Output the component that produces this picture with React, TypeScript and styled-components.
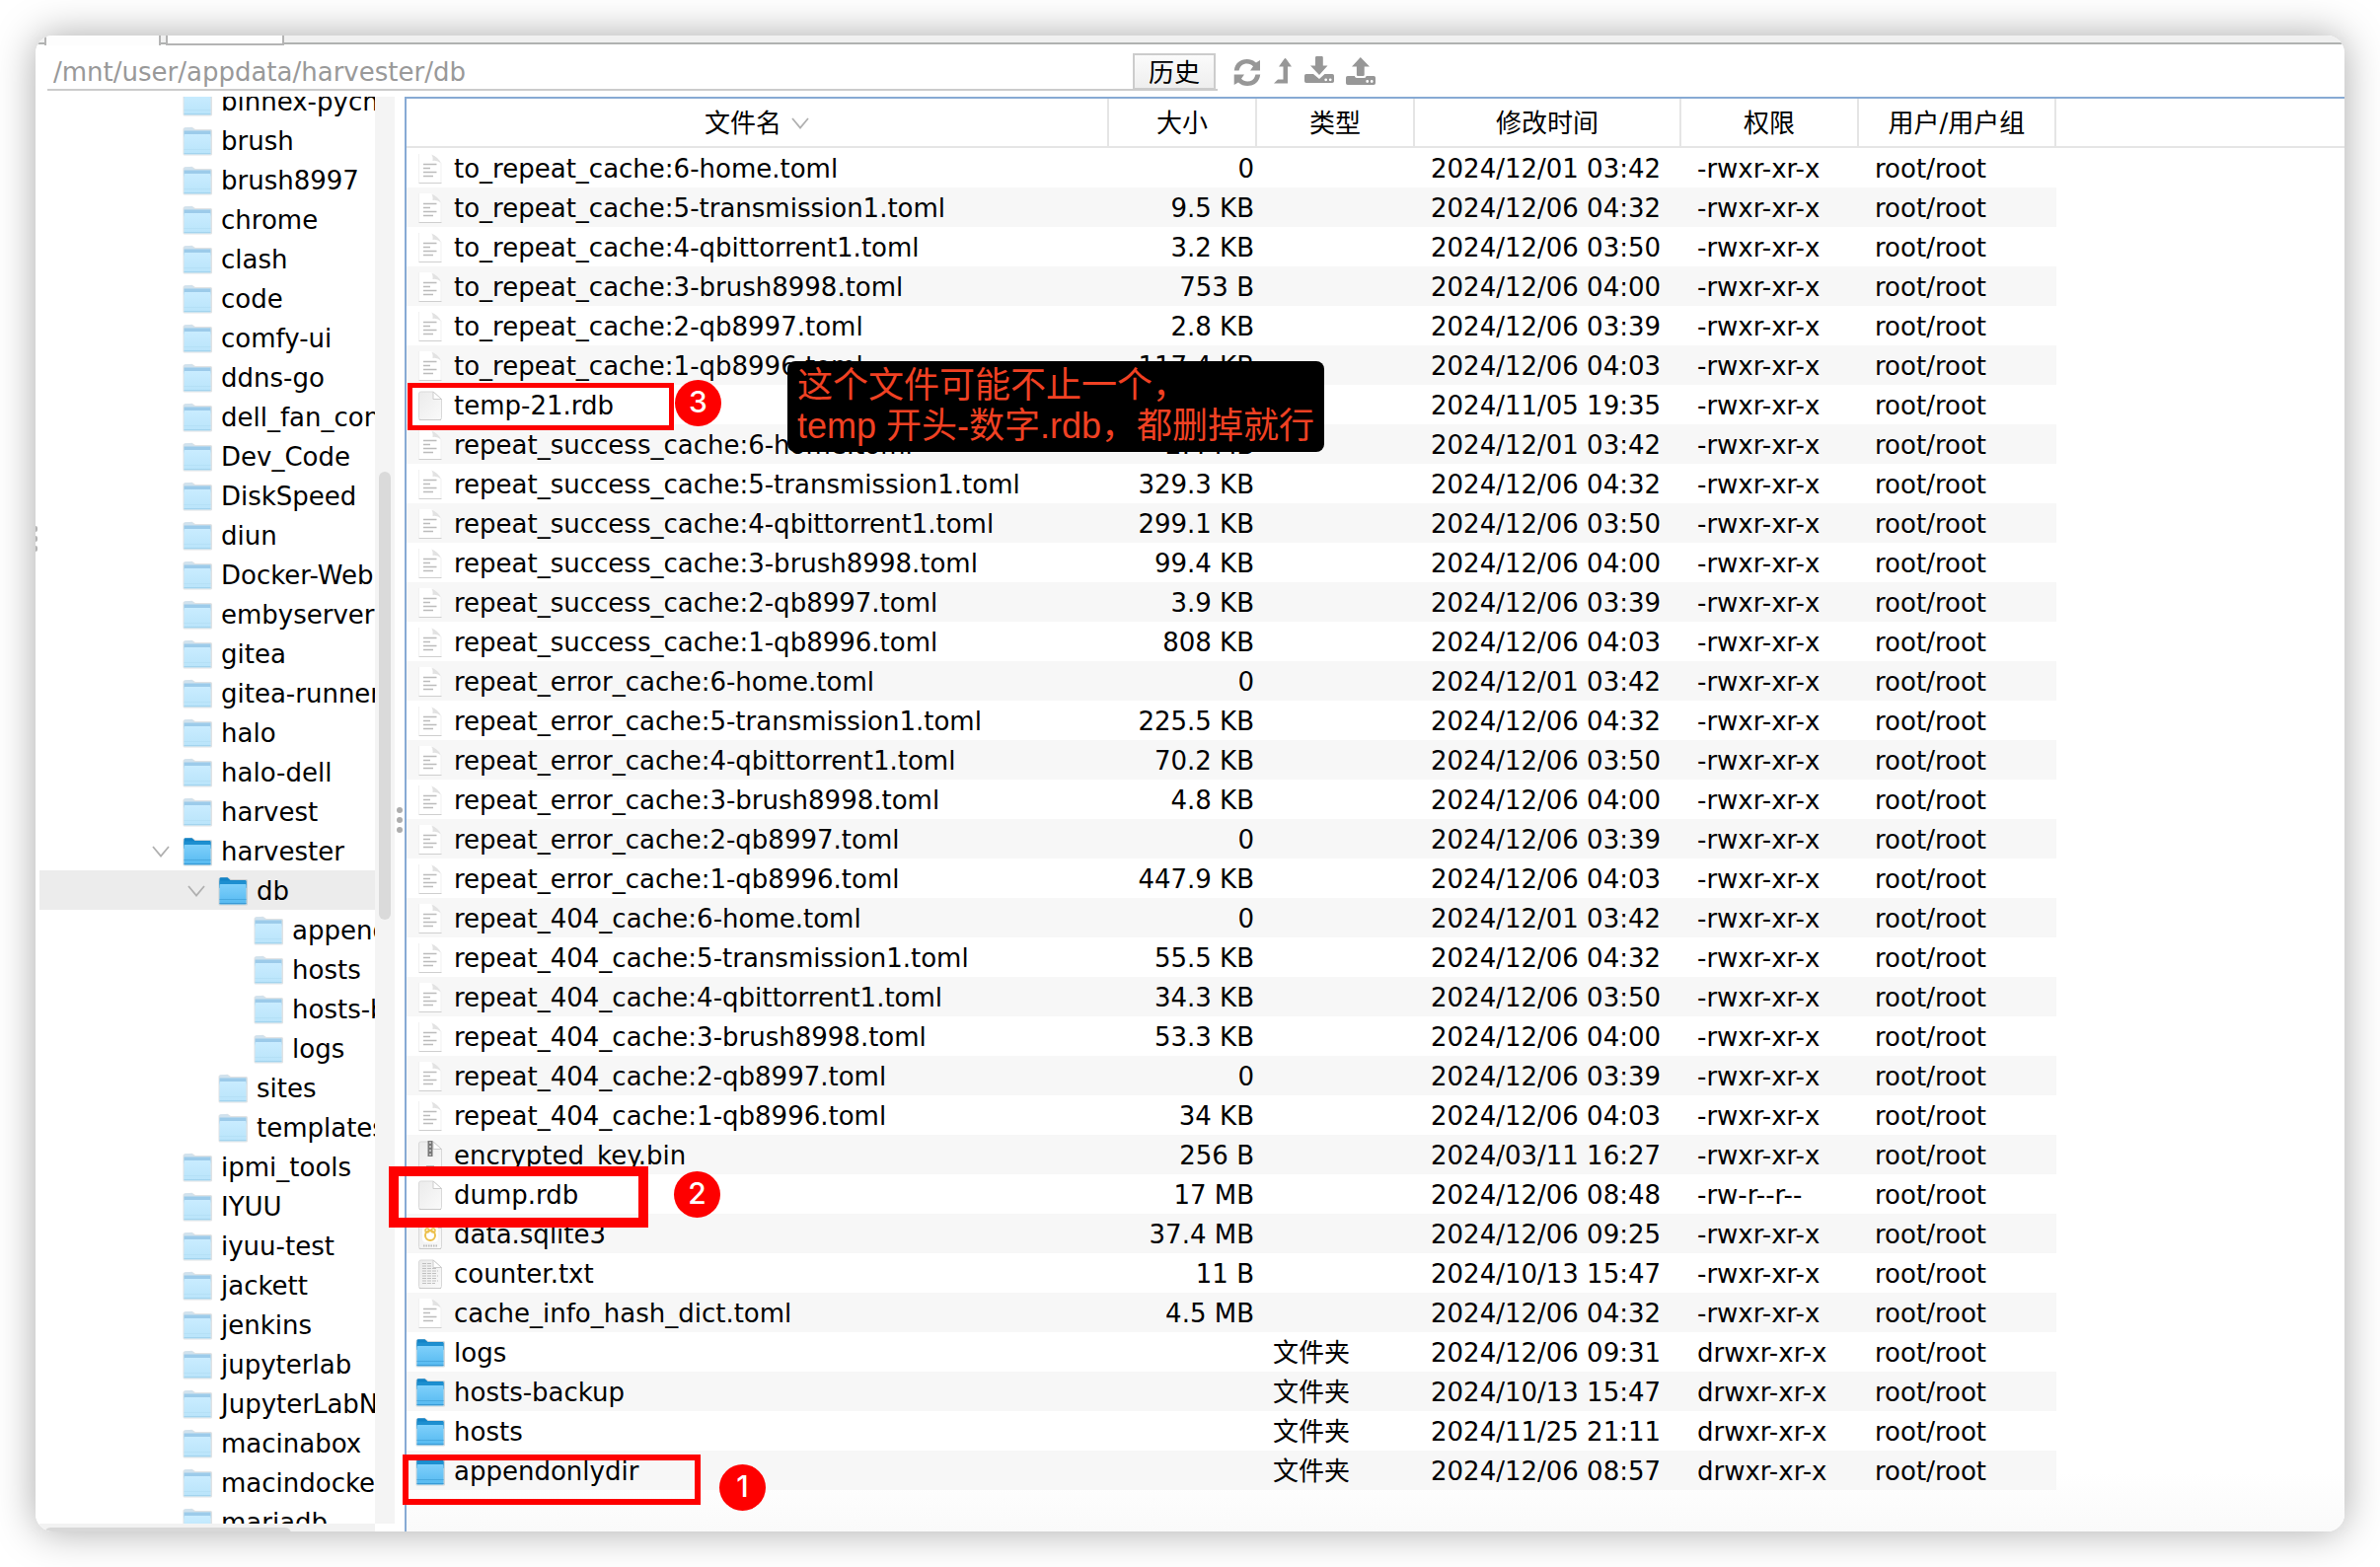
import React from "react";
import styled, { createGlobalStyle } from "styled-components";

const UI_FONT = '"DejaVu Sans", "Noto Sans CJK SC", sans-serif';
const NOTE_FONT = '"Liberation Sans", "Noto Sans CJK SC", sans-serif';

const GlobalStyle = createGlobalStyle`
  * { box-sizing: border-box; }
  body { margin: 0; background: #fff; }
`;

const Page = styled.div`
  height: 100vh;
  padding: 36px;
  display: flex;
  font-family: ${UI_FONT};
  font-size: 26px;
  line-height: 38px;
  color: #000;
`;

const Shell = styled.main`
  position: relative;
  flex: 1;
  min-width: 0;
  display: flex;
  border-radius: 18px;
  box-shadow: 0 0 40px rgba(0, 0, 0, 0.34);
`;

const Window = styled.div`
  flex: 1;
  min-width: 0;
  display: flex;
  flex-direction: column;
  overflow: hidden;
  border-radius: 18px;
  background: #fff;
`;

const TabStrip = styled.div`
  flex: none;
  height: 10px;
  padding-left: 9px;
  display: flex;
  gap: 5px;
  background: linear-gradient(#f0f0f0 7px, #b0b2b1 7px, #b0b2b1 9px, #fff 9px);
`;

const Tab = styled.div<{ $active?: boolean }>`
  width: ${(p) => (p.$active ? 118 : 120)}px;
  border: 2px solid #b4b4b4;
  border-top: 0;
  border-bottom-width: ${(p) => (p.$active ? 0 : 2)}px;
  background: #fdfdfd;
`;

const Toolbar = styled.div`
  flex: none;
  height: 52px;
  padding-left: 12px;
  display: flex;
  align-items: flex-start;
`;

const PathBar = styled.div`
  flex: 0 1 1186px;
  height: 46px;
  padding-right: 2px;
  display: flex;
  align-items: flex-end;
  border-bottom: 2px solid #cbcbcb;
`;

const PathInput = styled.input`
  flex: 1;
  min-width: 0;
  height: 34px;
  padding: 0 6px;
  border: 0;
  outline: 0;
  background: none;
  color: #999;
  font: inherit;
  line-height: 34px;
`;

const HistoryButton = styled.button`
  width: 84px;
  height: 36px;
  padding: 2px 0 0;
  border: 2px solid #ccc;
  border-bottom-width: 1px;
  background: linear-gradient(#fbfbfb, #eee);
  color: #000;
  font: inherit;
  line-height: 30px;
`;

const Actions = styled.div`
  display: flex;
  gap: 12px;
  padding: 10px 0 0 16px;
`;

const IconButton = styled.button`
  padding: 0;
  border: 0;
  background: none;
  color: #979797;
  height: 32px;
  svg { display: block; fill: currentColor; }
`;

const Body = styled.div`
  flex: 1;
  min-height: 0;
  display: flex;
`;

const OuterGrip = styled.div`
  flex: none;
  width: 4px;
  padding-top: 435px;
  display: flex;
  flex-direction: column;
  gap: 4px;
  i { width: 2px; height: 6px; background: #b4b4b4; border-radius: 0 3px 3px 0; }
`;

const Sidebar = styled.nav`
  flex: none;
  width: 360px;
  display: grid;
  grid-template-columns: 340px 20px;
  grid-template-rows: minmax(0, 1fr) 8px;
`;

const TreeViewport = styled.div`
  overflow: hidden;
`;

const Tree = styled.ul`
  list-style: none;
  margin: -16px 0 0;
  padding: 0;
`;

const TreeRow = styled.li<{ $level: number; $selected?: boolean }>`
  display: flex;
  align-items: center;
  height: 40px;
  padding: 2px 0 0 ${(p) => 114 + p.$level * 36}px;
  background: ${(p) => (p.$selected ? "#ececec" : "transparent")};
  white-space: nowrap;
`;

const Twisty = styled.span`
  flex: none;
  width: 32px;
  svg { display: block; }
`;

const IconSlot = styled.span`
  flex: none;
  width: 28px;
  margin-right: 10px;
  display: flex;
  justify-content: center;
  svg { display: block; flex: none; }
`;

const VTrack = styled.div`
  padding: 380px 4px 0;
  background: #f4f4f4;
`;

const VThumb = styled.div`
  width: 12px;
  height: 454px;
  border-radius: 6px;
  background: #dadada;
`;

const HTrack = styled.div`
  padding: 4px 0 0 5px;
  background: #f2f2f2;
  overflow: hidden;
`;

const HThumb = styled.div`
  width: 250px;
  height: 12px;
  border-radius: 6px;
  background: #d8d8d8;
`;

const Splitter = styled.div`
  flex: none;
  width: 10px;
  display: flex;
  flex-direction: column;
  align-items: center;
  gap: 4px;
  padding-top: 720px;
  i { width: 6px; height: 6px; border-radius: 50%; background: #adadad; }
`;

const FilePane = styled.section`
  flex: 1;
  min-width: 0;
  overflow: hidden;
  border-top: 2px solid #87aad4;
  border-left: 2px solid #87aad4;
  background: linear-gradient(#fff calc(100% - 60px), #fafafa);
`;

const FileTable = styled.table`
  width: 100%;
  table-layout: fixed;
  border-collapse: separate;
  border-spacing: 0;
  white-space: nowrap;
`;

const Th = styled.th`
  height: 50px;
  padding: 2px 0 0;
  border-right: 2px solid #e5e5e5;
  border-bottom: 2px solid #e5e5e5;
  font-weight: 400;
  text-align: center;
  &:last-child { border-right: 0; }
`;

const SortLabel = styled.span`
  display: flex;
  align-items: center;
  justify-content: center;
  gap: 10px;
`;

const Tr = styled.tr`
  &:nth-child(even) td:not(:last-child) { background: #f7f7f7; }
`;

const Td = styled.td<{ $right?: boolean }>`
  height: 40px;
  padding: ${(p) => (p.$right ? "2px 3px 0 0" : "2px 0 0 16px")};
  text-align: ${(p) => (p.$right ? "right" : "left")};
`;

const NameCell = styled.td`
  height: 40px;
  padding: 2px 0 0 10px;
`;

const NameBox = styled.div`
  display: flex;
  align-items: center;
`;

const Outline = styled.div<{ $x: number; $y: number; $w: number; $h: number; $b: number }>`
  position: absolute;
  left: ${(p) => p.$x}px;
  top: ${(p) => p.$y}px;
  width: ${(p) => p.$w}px;
  height: ${(p) => p.$h}px;
  border: ${(p) => p.$b}px solid #fe0000;
  pointer-events: none;
`;

const Badge = styled.div<{ $x: number; $y: number }>`
  position: absolute;
  left: ${(p) => p.$x}px;
  top: ${(p) => p.$y}px;
  width: 47px;
  height: 47px;
  border-radius: 50%;
  background: #fe0000;
  color: #fff;
  font: 500 30px/44px Inter, sans-serif;
  text-align: center;
`;

const Note = styled.div`
  position: absolute;
  left: 762px;
  top: 330px;
  width: 544px;
  height: 92px;
  padding: 4px 10px 0;
  border-radius: 8px;
  background: #000;
  color: #f04123;
  font: 36px/41px ${NOTE_FONT};
  white-space: nowrap;
`;

function Folder({ light }: { light?: boolean }) {
  const id = light ? "folderLight" : "folderDeep";
  return (
    <svg width="30" height="30" viewBox="0 0 30 30" aria-hidden="true">
      <defs>
        <linearGradient id={id} x1="0" y1="0" x2="0" y2="1">
          <stop offset="0" stopColor={light ? "#c9ecff" : "#7fd0fb"} />
          <stop offset="1" stopColor={light ? "#b9e4fa" : "#55b9f0"} />
        </linearGradient>
      </defs>
      <path d="M.5 3Q.5 1.500 2 1.500L9.500 .8L13 3H28.500Q30 3 30 4.500V28Q30 29.500 28.500 29.500H2Q.5 29.500 .5 28Z" fill={light ? "#dfe2e4" : "#aeb9c0"} opacity={light ? 1 : 0.55} />
      <path d="M1.500 2.500Q1.500 1.300 3 1.300H9.500L12.500 4H27.500Q28.500 4 28.500 5.500V12H1.500Z" fill={light ? "#d0e2ee" : "#1283c6"} />
      <rect x="1.500" y="4.500" width="27" height="6" fill={light ? "#9ccbea" : "#1d8fd0"} />
      <rect x="1.500" y="8" width="27" height="20.500" rx="1" fill={`url(#${id})`} />
      <path d="M1.500 23.500H28.500" stroke={light ? "#b5e0f6" : "#48a9e0"} />
      <path d="M1.500 27.500H28.500" stroke={light ? "#a3d4ee" : "#3a9bd6"} />
    </svg>
  );
}

type Kind = "lines" | "blank" | "bin" | "sqlite" | "txt" | "dir";

function Doc({ kind }: { kind: Kind }) {
  const soft = kind === "lines";
  return (
    <svg width="24" height="32" viewBox="0 0 24 32" aria-hidden="true">
      <defs>
        <linearGradient id="sheet" x1="0" y1="0" x2="1" y2="1">
          <stop offset="0" stopColor="#ebebeb" />
          <stop offset="1" stopColor="#fafafa" />
        </linearGradient>
      </defs>
      {soft ? (
        <>
          <path d="M.5 1H13.500L23 10V30H.5Z" fill="#fff" />
          <path d="M1 1.500H13Q15 3 14.500 8Q19 7 23 10.500Q20 4 13 1.500" fill="#e2e2e2" />
          <path d="M.5 1V30M23 10V30" stroke="#f1f1f1" />
          <path d="M.5 30.500H23.500" stroke="#cfcfcf" />
          <path d="M5 11.500H18.500M5 15.500H12M5 19.500H18.500M5 23.500H15" stroke="#bcbcbc" strokeWidth="1.500" />
        </>
      ) : (
        <>
          <path d="M2.500 2H15L23.500 9.500V28.500Q23.500 30.500 21.500 30.500H2.500Q.5 30.500 .5 28.500V4Q.5 2 2.500 2Z" fill="url(#sheet)" stroke="#d9d9d9" />
          <path d="M.8 30.500H23" stroke="#c9c9c9" />
          <path d="M15 2V9.500H23.500Z" fill="#fff" stroke="#cdcdcd" />
        </>
      )}
      {kind === "bin" && (
        <>
          <path d="M12 1V17" stroke="#777" strokeWidth="5" />
          <path d="M12 2V17" stroke="#bbb" strokeWidth="2" strokeDasharray="2 2" />
          <path d="M8 27H16" stroke="#bbb" strokeWidth="2" />
        </>
      )}
      {kind === "sqlite" && (
        <>
          <rect x="4" y="7" width="16" height="17" rx="4" fill="#fff" />
          <circle cx="12" cy="17" r="5" fill="none" stroke="#ecc04d" strokeWidth="2" />
          <circle cx="9" cy="12" r="2" fill="none" stroke="#ecc04d" strokeWidth="1.500" />
          <circle cx="15" cy="12" r="2" fill="none" stroke="#ecc04d" strokeWidth="1.500" />
          <path d="M5 27.500H19" stroke="#bbb" strokeWidth="2" strokeDasharray="1.500 1" />
        </>
      )}
      {kind === "txt" && (
        <path d="M4 5.500H14M4 8H13M4 10.500H19M4 13H20M4 15.500H18M4 18H20M4 20.500H19M4 23H20M4 25.500H17" stroke="#c0c0c0" strokeDasharray="4 1" />
      )}
    </svg>
  );
}

const Chevron = () => (
  <svg width="18" height="12" viewBox="0 0 18 12" aria-hidden="true">
    <path d="M1 1L9 10.500L17 1" fill="none" stroke="#b0b0b0" strokeWidth="1.800" />
  </svg>
);

const RefreshIcon = () => (
  <svg width="28" height="32" viewBox="0 0 28 32">
    <path d="M.8 15.500C1.500 8 7 4 13.800 4C17.500 4 20.500 5.300 23 7.600L27 5V15.500H17L20 11.200C18.200 9.400 16.200 8.400 13.800 8.400C9.500 8.400 6.700 10.800 5.600 15.500Z" />
    <path d="M27.200 19.500C26.500 27 21 31 14.200 31C10.500 31 7.500 29.700 5 27.400L.7 30V19.500H11L8 23.800C9.800 25.600 11.800 26.600 14.200 26.600C18.500 26.600 21.300 24.200 22.400 19.500Z" />
  </svg>
);

const UpIcon = () => (
  <svg width="20" height="32" viewBox="0 0 20 32">
    <path d="M12.500 3Q13 3 13.500 3.800L19 11.500H15V28.500H1L5 24.500H10.500V11.500H6L11.500 3.800Q12 3 12.500 3Z" />
  </svg>
);

const DownloadIcon = () => (
  <svg width="30" height="32" viewBox="0 0 30 32">
    <path d="M12.500 1H17.500Q18.800 1 18.800 2.300V10.500H23.500L15 20L6 10.500H11V2.300Q11 1 12.500 1Z" />
    <path fillRule="evenodd" d="M1.800 19H9L15 24L20.500 19H28.200Q30 19 30 20.800V26.200Q30 28 28.200 28H1.800Q0 28 0 26.200V20.800Q0 19 1.800 19ZM20.300 24.800a1.400 1.400 0 1 0 2.800 0a1.400 1.400 0 1 0-2.800 0ZM24.800 24.800a1.400 1.400 0 1 0 2.800 0a1.400 1.400 0 1 0-2.800 0Z" />
  </svg>
);

const UploadIcon = () => (
  <svg width="30" height="32" viewBox="0 0 30 32">
    <path d="M14.800 2L24 11.500H18.700V19.700Q18.700 21 17.400 21H12.200Q10.900 21 10.900 19.700V11.500H6Z" />
    <path fillRule="evenodd" d="M1.800 21H9V21.500Q9.500 23 11.500 23H18Q20 23 20.500 21.500V21H28.200Q30 21 30 22.800V28.200Q30 30 28.200 30H1.800Q0 30 0 28.200V22.800Q0 21 1.800 21ZM20.300 26.500a1.400 1.400 0 1 0 2.800 0a1.400 1.400 0 1 0-2.800 0ZM24.800 26.500a1.400 1.400 0 1 0 2.800 0a1.400 1.400 0 1 0-2.800 0Z" />
  </svg>
);

type Node = { name: string; level?: number; open?: boolean; selected?: boolean };

const tree: Node[] = [
  ...["binhex-pycharm", "brush", "brush8997", "chrome", "clash", "code", "comfy-ui", "ddns-go", "dell_fan_con", "Dev_Code", "DiskSpeed", "diun", "Docker-Web", "embyserver", "gitea", "gitea-runner", "halo", "halo-dell", "harvest"].map((name) => ({ name })),
  { name: "harvester", open: true },
  { name: "db", level: 1, open: true, selected: true },
  { name: "appendonlydir", level: 2 },
  { name: "hosts", level: 2 },
  { name: "hosts-backup", level: 2 },
  { name: "logs", level: 2 },
  { name: "sites", level: 1 },
  { name: "templates", level: 1 },
  ...["ipmi_tools", "IYUU", "iyuu-test", "jackett", "jenkins", "jupyterlab", "JupyterLabNB", "macinabox", "macindocker", "mariadb"].map((name) => ({ name })),
];

type FileRow = [name: string, size: string, time: string, kind?: Kind, perm?: string];

const files: FileRow[] = [
  ["to_repeat_cache:6-home.toml", "0", "2024/12/01 03:42"],
  ["to_repeat_cache:5-transmission1.toml", "9.5 KB", "2024/12/06 04:32"],
  ["to_repeat_cache:4-qbittorrent1.toml", "3.2 KB", "2024/12/06 03:50"],
  ["to_repeat_cache:3-brush8998.toml", "753 B", "2024/12/06 04:00"],
  ["to_repeat_cache:2-qb8997.toml", "2.8 KB", "2024/12/06 03:39"],
  ["to_repeat_cache:1-qb8996.toml", "117.4 KB", "2024/12/06 04:03"],
  ["temp-21.rdb", "", "2024/11/05 19:35", "blank"],
  ["repeat_success_cache:6-home.toml", "2.4 MB", "2024/12/01 03:42"],
  ["repeat_success_cache:5-transmission1.toml", "329.3 KB", "2024/12/06 04:32"],
  ["repeat_success_cache:4-qbittorrent1.toml", "299.1 KB", "2024/12/06 03:50"],
  ["repeat_success_cache:3-brush8998.toml", "99.4 KB", "2024/12/06 04:00"],
  ["repeat_success_cache:2-qb8997.toml", "3.9 KB", "2024/12/06 03:39"],
  ["repeat_success_cache:1-qb8996.toml", "808 KB", "2024/12/06 04:03"],
  ["repeat_error_cache:6-home.toml", "0", "2024/12/01 03:42"],
  ["repeat_error_cache:5-transmission1.toml", "225.5 KB", "2024/12/06 04:32"],
  ["repeat_error_cache:4-qbittorrent1.toml", "70.2 KB", "2024/12/06 03:50"],
  ["repeat_error_cache:3-brush8998.toml", "4.8 KB", "2024/12/06 04:00"],
  ["repeat_error_cache:2-qb8997.toml", "0", "2024/12/06 03:39"],
  ["repeat_error_cache:1-qb8996.toml", "447.9 KB", "2024/12/06 04:03"],
  ["repeat_404_cache:6-home.toml", "0", "2024/12/01 03:42"],
  ["repeat_404_cache:5-transmission1.toml", "55.5 KB", "2024/12/06 04:32"],
  ["repeat_404_cache:4-qbittorrent1.toml", "34.3 KB", "2024/12/06 03:50"],
  ["repeat_404_cache:3-brush8998.toml", "53.3 KB", "2024/12/06 04:00"],
  ["repeat_404_cache:2-qb8997.toml", "0", "2024/12/06 03:39"],
  ["repeat_404_cache:1-qb8996.toml", "34 KB", "2024/12/06 04:03"],
  ["encrypted_key.bin", "256 B", "2024/03/11 16:27", "bin"],
  ["dump.rdb", "17 MB", "2024/12/06 08:48", "blank", "-rw-r--r--"],
  ["data.sqlite3", "37.4 MB", "2024/12/06 09:25", "sqlite"],
  ["counter.txt", "11 B", "2024/10/13 15:47", "txt"],
  ["cache_info_hash_dict.toml", "4.5 MB", "2024/12/06 04:32"],
  ["logs", "", "2024/12/06 09:31", "dir", "drwxr-xr-x"],
  ["hosts-backup", "", "2024/10/13 15:47", "dir", "drwxr-xr-x"],
  ["hosts", "", "2024/11/25 21:11", "dir", "drwxr-xr-x"],
  ["appendonlydir", "", "2024/12/06 08:57", "dir", "drwxr-xr-x"],
];

export default function App() {
  return (
    <Page>
      <GlobalStyle />
      <Shell>
        <Window>
          <TabStrip>
            <Tab $active />
            <Tab />
          </TabStrip>
          <Toolbar>
            <PathBar>
              <PathInput aria-label="path" defaultValue="/mnt/user/appdata/harvester/db" />
              <HistoryButton type="button">历史</HistoryButton>
            </PathBar>
            <Actions>
              <IconButton type="button" aria-label="refresh"><RefreshIcon /></IconButton>
              <IconButton type="button" aria-label="parent folder"><UpIcon /></IconButton>
              <IconButton type="button" aria-label="download"><DownloadIcon /></IconButton>
              <IconButton type="button" aria-label="upload"><UploadIcon /></IconButton>
            </Actions>
          </Toolbar>
          <Body>
            <OuterGrip><i /><i /><i /></OuterGrip>
            <Sidebar>
              <TreeViewport>
                <Tree>
                  {tree.map((n, i) => (
                    <TreeRow key={i} $level={n.level ?? 0} $selected={n.selected}>
                      <Twisty>{n.open && <Chevron />}</Twisty>
                      <IconSlot><Folder light={!n.open} /></IconSlot>
                      {n.name}
                    </TreeRow>
                  ))}
                </Tree>
              </TreeViewport>
              <VTrack><VThumb /></VTrack>
              <HTrack><HThumb /></HTrack>
            </Sidebar>
            <Splitter><i /><i /><i /></Splitter>
            <FilePane>
              <FileTable>
                <colgroup>
                  <col style={{ width: 712 }} />
                  <col style={{ width: 150 }} />
                  <col style={{ width: 160 }} />
                  <col style={{ width: 270 }} />
                  <col style={{ width: 180 }} />
                  <col style={{ width: 200 }} />
                  <col />
                </colgroup>
                <thead>
                  <tr>
                    <Th><SortLabel>文件名<Chevron /></SortLabel></Th>
                    <Th>大小</Th>
                    <Th>类型</Th>
                    <Th>修改时间</Th>
                    <Th>权限</Th>
                    <Th>用户/用户组</Th>
                    <Th />
                  </tr>
                </thead>
                <tbody>
                  {files.map(([name, size, time, kind = "lines", perm = "-rwxr-xr-x"]) => (
                    <Tr key={name}>
                      <NameCell>
                        <NameBox>
                          <IconSlot>{kind === "dir" ? <Folder /> : <Doc kind={kind} />}</IconSlot>
                          {name}
                        </NameBox>
                      </NameCell>
                      <Td $right>{size}</Td>
                      <Td>{kind === "dir" ? "文件夹" : ""}</Td>
                      <Td>{time}</Td>
                      <Td>{perm}</Td>
                      <Td>root/root</Td>
                      <Td />
                    </Tr>
                  ))}
                </tbody>
              </FileTable>
            </FilePane>
          </Body>
        </Window>
        <Outline $x={377} $y={352} $w={270} $h={48} $b={5} />
        <Badge $x={648} $y={349}>3</Badge>
        <Note>
          这个文件可能不止一个，
          <br />
          temp 开头-数字.rdb，都删掉就行
        </Note>
        <Outline $x={358} $y={1146} $w={263} $h={62} $b={10} />
        <Badge $x={647} $y={1151}>2</Badge>
        <Outline $x={372} $y={1438} $w={302} $h={51} $b={6} />
        <Badge $x={693} $y={1448}>1</Badge>
      </Shell>
    </Page>
  );
}
